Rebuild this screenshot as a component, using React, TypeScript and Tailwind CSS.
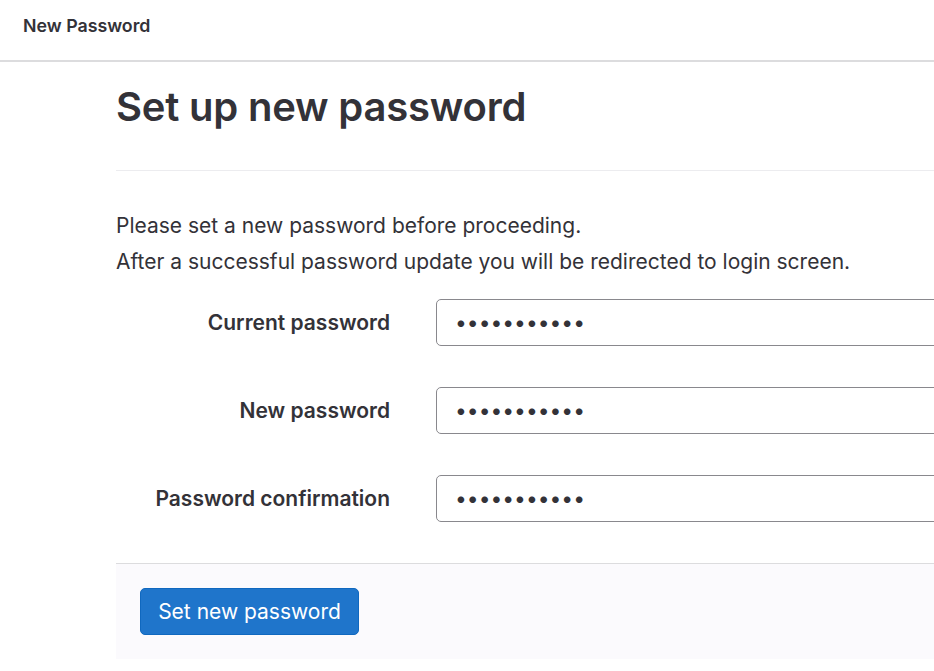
export default function App() {
  const fields = [
    { id: "current", label: "Current password" },
    { id: "new", label: "New password" },
    { id: "confirm", label: "Password confirmation" },
  ];

  return (
    <div className="w-[934px] h-[671px] overflow-hidden bg-white text-[#333238] font-['Inter',sans-serif]">
      {/* Top bar */}
      <div className="h-[62px] border-b-2 border-[#dcdcde] flex items-center px-[23px] pb-[7px]">
        <span className="text-[17.8px] font-semibold">New Password</span>
      </div>

      <div className="pl-[116px] w-[1200px]">
        {/* Title */}
        <div className="pt-[21px] pb-[39px] border-b border-[#ececef]">
          <h1 className="text-[40px] leading-[48px] font-semibold tracking-[-0.2px]">Set up new password</h1>
        </div>

        {/* Intro */}
        <div className="mt-[37px] text-[21px] leading-[36px]">
          <p>Please set a new password before proceeding.</p>
          <p>After a successful password update you will be redirected to login screen.</p>
        </div>

        {/* Fields */}
        <form className="mt-[19px] flex flex-col gap-[41px]" onSubmit={(e) => e.preventDefault()}>
          {fields.map((f) => (
            <div key={f.id} className="flex items-center gap-[46px]">
              <label htmlFor={f.id} className="w-[274px] text-right text-[21px] font-semibold">
                {f.label}
              </label>
              <input
                id={f.id}
                type="password"
                readOnly
                defaultValue="secretpass1"
                className="h-[47px] w-[600px] rounded-[5px] border border-[#89888d] pl-[18px] text-[21px] text-[#333238] outline-none"
              />
            </div>
          ))}
        </form>

        {/* Footer */}
        <div className="mt-[41px] border-t border-[#dcdcde] bg-[#fbfafd] px-[24px] py-[24px]">
          <button
            type="button"
            className="h-[47px] w-[219px] rounded-[5px] border border-[#1068bf] bg-[#1f75cb] text-[21px] text-white"
          >
            Set new password
          </button>
        </div>
      </div>
    </div>
  );
}
